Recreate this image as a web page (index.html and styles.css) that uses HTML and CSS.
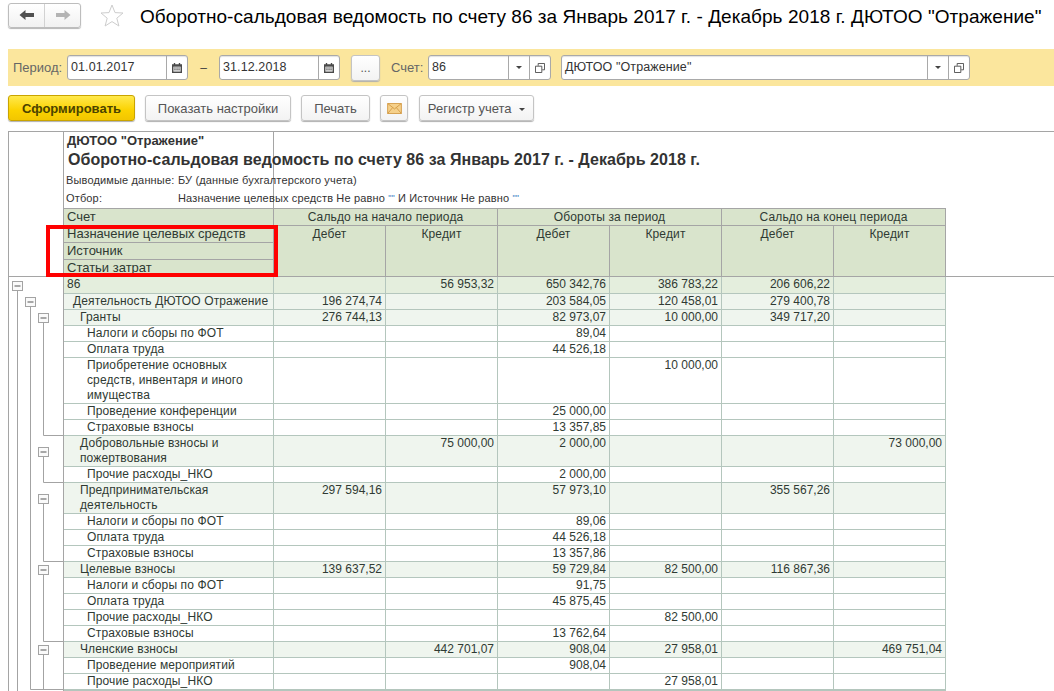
FILE: index.html
```html
<!DOCTYPE html>
<html lang="ru">
<head>
  <meta charset="UTF-8">
  <title>Оборотно-сальдовая ведомость</title>
  <link rel="stylesheet" href="styles.css">
</head>
<body>
  <header class="title-bar">
    <div class="nav">
      <button class="nav-btn">
        <svg width="16" height="12" viewBox="0 0 16 12"><path d="M0.5 6 L6.5 1 V4 H15 V8 H6.5 V11 Z" fill="#505050"/></svg>
      </button>
      <button class="nav-btn">
        <svg width="16" height="12" viewBox="0 0 16 12"><path d="M15.5 6 L9.5 1 V4 H1 V8 H9.5 V11 Z" fill="#b4b4b4"/></svg>
      </button>
    </div>
    <svg class="star" width="24" height="23" viewBox="0 0 24 23"><path d="M12 1 L15 8.6 L23 9 L16.8 14.2 L18.9 22 L12 17.6 L5.1 22 L7.2 14.2 L1 9 L9 8.6 Z" fill="#fff" stroke="#cdcdcd"/></svg>
    <h1 class="page-title">Оборотно-сальдовая ведомость по счету 86 за Январь 2017 г. - Декабрь 2018 г. ДЮТОО "Отражение"</h1>
  </header>

  <div class="filter-bar">
    <span class="label label-period">Период:</span>
    <div class="field field-date">
      <span class="field-text">01.01.2017</span>
      <span class="field-btn field-btn-cal">
        <svg width="10" height="10" viewBox="0 0 11 11"><path d="M0 1.5 H2 V0 H3.5 V1.5 H7.5 V0 H9 V1.5 H11 V11 H0 Z" fill="#4a4a4a"/><path d="M1.5 4 H9.5 V9.5 H1.5 Z" fill="#e8e8e8"/><path d="M2.5 5 H4 V6 H2.5 Z M4.8 5 H6.3 V6 H4.8 Z M7 5 H8.5 V6 H7 Z M2.5 7 H4 V8 H2.5 Z M4.8 7 H6.3 V8 H4.8 Z M7 7 H8.5 V8 H7 Z" fill="#4a4a4a"/></svg>
      </span>
    </div>
    <span class="dash">–</span>
    <div class="field field-date">
      <span class="field-text">31.12.2018</span>
      <span class="field-btn field-btn-cal">
        <svg width="10" height="10" viewBox="0 0 11 11"><path d="M0 1.5 H2 V0 H3.5 V1.5 H7.5 V0 H9 V1.5 H11 V11 H0 Z" fill="#4a4a4a"/><path d="M1.5 4 H9.5 V9.5 H1.5 Z" fill="#e8e8e8"/><path d="M2.5 5 H4 V6 H2.5 Z M4.8 5 H6.3 V6 H4.8 Z M7 5 H8.5 V6 H7 Z M2.5 7 H4 V8 H2.5 Z M4.8 7 H6.3 V8 H4.8 Z M7 7 H8.5 V8 H7 Z" fill="#4a4a4a"/></svg>
      </span>
    </div>
    <button class="btn btn-dots">...</button>
    <span class="label label-account">Счет:</span>
    <div class="field field-account">
      <span class="field-text">86</span>
      <span class="field-btn"><i class="caret"></i></span>
      <span class="field-btn">
        <svg width="10" height="10" viewBox="0 0 11 11"><path d="M3.5 3 V0.5 H10.5 V7.5 H8 M0.5 3.5 H7.5 V10.5 H0.5 Z" fill="none" stroke="#4a4a4a"/></svg>
      </span>
    </div>
    <div class="field field-org">
      <span class="field-text">ДЮТОО "Отражение"</span>
      <span class="field-btn"><i class="caret"></i></span>
      <span class="field-btn">
        <svg width="10" height="10" viewBox="0 0 11 11"><path d="M3.5 3 V0.5 H10.5 V7.5 H8 M0.5 3.5 H7.5 V10.5 H0.5 Z" fill="none" stroke="#4a4a4a"/></svg>
      </span>
    </div>
  </div>

  <div class="toolbar">
    <button class="btn btn-primary">Сформировать</button>
    <button class="btn btn-settings">Показать настройки</button>
    <button class="btn btn-print">Печать</button>
    <button class="btn btn-mail">
      <svg width="15" height="11" viewBox="0 0 16 12"><path d="M0.5 0.5 H15.5 V11.5 H0.5 Z" fill="#f5d08a" stroke="#d39a45"/><path d="M0.5 0.5 L8 6.5 L15.5 0.5 M0.5 11.5 L6 5 M15.5 11.5 L10 5" fill="none" stroke="#d39a45"/></svg>
    </button>
    <button class="btn btn-register">Регистр учета <i class="caret caret-btn"></i></button>
  </div>

  <div class="report">
    <table class="sheet">
      <colgroup>
        <col class="col-tree"><col class="col-name">
        <col class="col-num"><col class="col-num"><col class="col-num">
        <col class="col-num"><col class="col-num"><col class="col-num">
        <col class="col-rest">
      </colgroup>
      <tbody>
        <tr class="r-org">
          <td class="tree" rowspan="8"></td>
          <td class="top">ДЮТОО "Отражение"</td>
          <td class="blank-top" colspan="7"></td>
        </tr>
        <tr class="r-caption">
          <td class="top">Оборотно-сальдовая ведомость по счету 86 за Январь 2017 г. - Декабрь 2018 г.</td>
          <td class="blank" colspan="7"></td>
        </tr>
        <tr class="r-param">
          <td class="top"><span class="param-name">Выводимые данные:</span>БУ (данные бухгалтерского учета)</td>
          <td class="blank" colspan="7"></td>
        </tr>
        <tr class="r-param r-filter">
          <td class="top"><span class="param-name">Отбор:</span>Назначение целевых средств Не равно <span class="quotes">""</span> И Источник Не равно <span class="quotes">""</span></td>
          <td class="blank" colspan="7"></td>
        </tr>
        <tr class="r-head">
          <th class="h-name">Счет</th>
          <th colspan="2">Сальдо на начало периода</th>
          <th colspan="2">Обороты за период</th>
          <th colspan="2">Сальдо на конец периода</th>
          <td class="blank" rowspan="4"></td>
        </tr>
        <tr class="r-head">
          <th class="h-name">Назначение целевых средств</th>
          <th rowspan="3">Дебет</th><th rowspan="3">Кредит</th>
          <th rowspan="3">Дебет</th><th rowspan="3">Кредит</th>
          <th rowspan="3">Дебет</th><th rowspan="3">Кредит</th>
        </tr>
        <tr class="r-head"><th class="h-name">Источник</th></tr>
        <tr class="r-head"><th class="h-name">Статьи затрат</th></tr>

        <tr class="lvl0">
          <td class="tree tree-first"></td><td class="name">86</td>
          <td></td><td>56 953,32</td><td>650 342,76</td><td>386 783,22</td><td>206 606,22</td><td></td><td class="rest rest-first"></td>
        </tr>
        <tr class="lvl1">
          <td class="tree"></td><td class="name">Деятельность ДЮТОО Отражение</td>
          <td>196 274,74</td><td></td><td>203 584,05</td><td>120 458,01</td><td>279 400,78</td><td></td><td class="rest"></td>
        </tr>
        <tr class="lvl2">
          <td class="tree"></td><td class="name">Гранты</td>
          <td>276 744,13</td><td></td><td>82 973,07</td><td>10 000,00</td><td>349 717,20</td><td></td><td class="rest"></td>
        </tr>
        <tr class="lvl3">
          <td class="tree"></td><td class="name">Налоги и сборы по ФОТ</td>
          <td></td><td></td><td>89,04</td><td></td><td></td><td></td><td class="rest"></td>
        </tr>
        <tr class="lvl3">
          <td class="tree"></td><td class="name">Оплата труда</td>
          <td></td><td></td><td>44 526,18</td><td></td><td></td><td></td><td class="rest"></td>
        </tr>
        <tr class="lvl3">
          <td class="tree"></td><td class="name">Приобретение основных средств, инвентаря и иного имущества</td>
          <td></td><td></td><td></td><td>10 000,00</td><td></td><td></td><td class="rest"></td>
        </tr>
        <tr class="lvl3">
          <td class="tree"></td><td class="name">Проведение конференции</td>
          <td></td><td></td><td>25 000,00</td><td></td><td></td><td></td><td class="rest"></td>
        </tr>
        <tr class="lvl3">
          <td class="tree"></td><td class="name">Страховые взносы</td>
          <td></td><td></td><td>13 357,85</td><td></td><td></td><td></td><td class="rest"></td>
        </tr>
        <tr class="lvl2">
          <td class="tree"></td><td class="name">Добровольные взносы и пожертвования</td>
          <td></td><td>75 000,00</td><td>2 000,00</td><td></td><td></td><td>73 000,00</td><td class="rest"></td>
        </tr>
        <tr class="lvl3">
          <td class="tree"></td><td class="name">Прочие расходы_НКО</td>
          <td></td><td></td><td>2 000,00</td><td></td><td></td><td></td><td class="rest"></td>
        </tr>
        <tr class="lvl2">
          <td class="tree"></td><td class="name">Предпринимательская деятельность</td>
          <td>297 594,16</td><td></td><td>57 973,10</td><td></td><td>355 567,26</td><td></td><td class="rest"></td>
        </tr>
        <tr class="lvl3">
          <td class="tree"></td><td class="name">Налоги и сборы по ФОТ</td>
          <td></td><td></td><td>89,06</td><td></td><td></td><td></td><td class="rest"></td>
        </tr>
        <tr class="lvl3">
          <td class="tree"></td><td class="name">Оплата труда</td>
          <td></td><td></td><td>44 526,18</td><td></td><td></td><td></td><td class="rest"></td>
        </tr>
        <tr class="lvl3">
          <td class="tree"></td><td class="name">Страховые взносы</td>
          <td></td><td></td><td>13 357,86</td><td></td><td></td><td></td><td class="rest"></td>
        </tr>
        <tr class="lvl2">
          <td class="tree"></td><td class="name">Целевые взносы</td>
          <td>139 637,52</td><td></td><td>59 729,84</td><td>82 500,00</td><td>116 867,36</td><td></td><td class="rest"></td>
        </tr>
        <tr class="lvl3">
          <td class="tree"></td><td class="name">Налоги и сборы по ФОТ</td>
          <td></td><td></td><td>91,75</td><td></td><td></td><td></td><td class="rest"></td>
        </tr>
        <tr class="lvl3">
          <td class="tree"></td><td class="name">Оплата труда</td>
          <td></td><td></td><td>45 875,45</td><td></td><td></td><td></td><td class="rest"></td>
        </tr>
        <tr class="lvl3">
          <td class="tree"></td><td class="name">Прочие расходы_НКО</td>
          <td></td><td></td><td></td><td>82 500,00</td><td></td><td></td><td class="rest"></td>
        </tr>
        <tr class="lvl3">
          <td class="tree"></td><td class="name">Страховые взносы</td>
          <td></td><td></td><td>13 762,64</td><td></td><td></td><td></td><td class="rest"></td>
        </tr>
        <tr class="lvl2">
          <td class="tree"></td><td class="name">Членские взносы</td>
          <td></td><td>442 701,07</td><td>908,04</td><td>27 958,01</td><td></td><td>469 751,04</td><td class="rest"></td>
        </tr>
        <tr class="lvl3">
          <td class="tree"></td><td class="name">Проведение мероприятий</td>
          <td></td><td></td><td>908,04</td><td></td><td></td><td></td><td class="rest"></td>
        </tr>
        <tr class="lvl3">
          <td class="tree"></td><td class="name">Прочие расходы_НКО</td>
          <td></td><td></td><td></td><td>27 958,01</td><td></td><td></td><td class="rest"></td>
        </tr>
        <tr class="lvl1">
          <td class="tree"></td><td class="name"></td>
          <td></td><td></td><td></td><td></td><td></td><td></td><td class="rest"></td>
        </tr>
      </tbody>
    </table>

    <!-- outline tree, coordinates are page pixels -->
    <svg class="outline" width="55" height="415" viewBox="8 276 55 415">
      <g fill="none" stroke="#a3a3a3">
        <path d="M17.5 290 V691"/>
        <path d="M30.5 307 V689.5 H63"/>
        <path d="M43.5 323 V435.5 H63"/>
        <path d="M43.5 457 V482.5 H63"/>
        <path d="M43.5 503 V561.5 H63"/>
        <path d="M43.5 574 V641.5 H63"/>
        <path d="M43.5 654 V689"/>
      </g>
      <g class="node"><rect x="12.5" y="281.5" width="10" height="9"/><path d="M14.5 286 H20.5"/></g>
      <g class="node"><rect x="25.5" y="297.5" width="10" height="9"/><path d="M27.5 302 H33.5"/></g>
      <g class="node"><rect x="38.5" y="313.5" width="10" height="9"/><path d="M40.5 318 H46.5"/></g>
      <g class="node"><rect x="38.5" y="447.5" width="10" height="9"/><path d="M40.5 452 H46.5"/></g>
      <g class="node"><rect x="38.5" y="494.5" width="10" height="9"/><path d="M40.5 499 H46.5"/></g>
      <g class="node"><rect x="38.5" y="565.5" width="10" height="9"/><path d="M40.5 570 H46.5"/></g>
      <g class="node"><rect x="38.5" y="645.5" width="10" height="9"/><path d="M40.5 650 H46.5"/></g>
    </svg>

    <div class="red-box"></div>
  </div>
</body>
</html>
```

FILE: styles.css
```css
* {
  box-sizing: border-box;
}

html, body {
  margin: 0;
  padding: 0;
  height: 691px;
  overflow: hidden;
  background: #fff;
}

body {
  font-family: "Liberation Sans", Arial, sans-serif;
  font-size: 12px;
  color: #333;
}

/* title */
.title-bar {
  display: flex;
  align-items: center;
  height: 49px;
  padding: 0 0 19px 8px;
}

.nav {
  display: flex;
  width: 73px;
  height: 25px;
  border: 1px solid #bdbdbd;
  border-radius: 3px;
  background: linear-gradient(#fff, #f1f1f1);
  box-shadow: 0 1px 1px #b5b5b5;
}

.nav-btn {
  flex: 1;
  padding: 0;
  border: none;
  background: none;
  display: flex;
  align-items: center;
  justify-content: center;
}

.nav-btn + .nav-btn {
  border-left: 1px solid #d2d2d2;
}

.star {
  margin-left: 19px;
}

.page-title {
  margin: 3px 0 0 16px;
  font-size: 19px;
  letter-spacing: 0.05px;
  font-weight: normal;
  color: #000;
  white-space: nowrap;
}

/* filter bar */
.filter-bar {
  display: flex;
  align-items: center;
  height: 37px;
  margin-left: 8px;
  padding-left: 5px;
  background: #fbe69d;
}

.label {
  font-size: 13px;
  color: #666;
}

.label-period {
  width: 54px;
}

.label-account {
  width: 37px;
  margin-left: 11px;
}

.field {
  display: flex;
  height: 25px;
  border: 1px solid #a9a9a9;
  border-radius: 3px;
  background: #fff;
  box-shadow: inset 0 1px 1px #e2e2e2;
}

.field-date {
  width: 121px;
}

.field-account {
  width: 123px;
}

.field-org {
  width: 409px;
  margin-left: 10px;
}

.field-text {
  flex: 1;
  padding-left: 3px;
  font-size: 12.5px;
  letter-spacing: 0.1px;
  line-height: 23px;
  color: #333;
}

.field-btn {
  width: 21px;
  border-left: 1px solid #a9a9a9;
  display: flex;
  align-items: center;
  justify-content: center;
}

.caret {
  display: inline-block;
  width: 0;
  height: 0;
  border-left: 3px solid transparent;
  border-right: 3px solid transparent;
  border-top: 3px solid #444;
}

.dash {
  width: 31px;
  text-align: center;
  color: #444;
}

/* buttons */
.btn {
  height: 26px;
  padding: 0;
  border: 1px solid #c4c4c4;
  border-radius: 3px;
  background: linear-gradient(#fff, #f3f3f3);
  box-shadow: 0 1px 1px #b0b0b0;
  font-family: inherit;
  font-size: 13px;
  color: #555;
}

.btn-dots {
  width: 29px;
  margin-left: 11px;
  font-size: 12px;
}

.toolbar {
  display: flex;
  gap: 10px;
  margin: 9px 0 10px 8px;
  height: 26px;
}

.btn-primary {
  width: 127px;
  border-color: #c9a400;
  background: linear-gradient(#ffe94d, #fbd200 60%, #f2c600);
  font-weight: bold;
  color: #4a4300;
}

.btn-settings {
  width: 146px;
}

.btn-print {
  width: 69px;
}

.btn-mail {
  width: 28px;
  display: flex;
  align-items: center;
  justify-content: center;
}

.btn-register {
  width: 115px;
  margin-left: 1px;
}

.caret-btn {
  margin-left: 4px;
  vertical-align: 2px;
}

/* report */
.report {
  position: relative;
  margin-left: 8px;
}

.sheet {
  table-layout: fixed;
  border-collapse: collapse;
  width: 1046px;
  font-size: 12px;
  line-height: 15px;
}

.col-tree { width: 55px; }
.col-name { width: 210px; }
.col-num { width: 112px; }
.col-rest { width: 109px; }

.sheet td,
.sheet th {
  padding: 0 3px 0 3px;
  vertical-align: top;
  border: 1px solid #b4c6bd;
  color: #2f3a33;
}

.sheet tbody tr > td {
  text-align: right;
}

.sheet td.tree {
  border: none;
  border-left: 1px solid #a5a5a5;
  border-right: 1px solid #a5a5a5;
  padding: 0;
}

.sheet td.rest,
.sheet td.blank {
  border: none;
}

.sheet td.blank-top {
  border: none;
  border-top: 1px solid #a5a5a5;
}

.sheet td.tree-first,
.sheet td.rest-first {
  border-top: 1px solid #a5a5a5;
}

.sheet td.top {
  text-align: left;
  white-space: nowrap;
  border: none;
  border-right: 1px solid #a5a5a5;
  color: #333;
}

tr.r-org { height: 17px; }
tr.r-caption { height: 23px; }
tr.r-param { height: 18px; }
tr.r-filter { height: 19px; }
tr.r-head { height: 17px; }

.sheet tr.r-org td.top {
  border-top: 1px solid #a5a5a5;
  padding-top: 1px;
  font-size: 13px;
  font-weight: bold;
}

.sheet tr.r-org td.tree {
  border-top: 1px solid #a5a5a5;
}

.sheet tr.r-caption td.top {
  padding-left: 4px;
  font-size: 16px;
  font-weight: bold;
  letter-spacing: 0.05px;
  line-height: 22px;
}

.sheet tr.r-param td.top {
  padding-left: 2px;
  font-size: 11px;
  letter-spacing: 0.15px;
  line-height: 17px;
}

.param-name {
  display: inline-block;
  width: 112px;
}

.quotes {
  color: #3d7fc4;
  font-size: 9px;
  vertical-align: 1px;
}

.sheet th {
  font-weight: normal;
  background: #d9e4cc;
  border-color: #a5a5a5;
  text-align: center;
  letter-spacing: 0.15px;
  line-height: 16px;
}

.sheet th.h-name {
  font-size: 13px;
  letter-spacing: 0;
  text-align: left;
}

.sheet .name {
  text-align: left;
  letter-spacing: 0.12px;
}

tr.lvl0 { height: 17px; background: #e4eedd; }
tr.lvl1,
tr.lvl2 { background: #eff5ee; }
tr.lvl3 { background: #fff; }

tr.lvl0 td.tree,
tr.lvl1 td.tree,
tr.lvl2 td.tree,
tr.lvl3 td.tree,
tr td.rest {
  background: #fff;
}

tr.lvl0 .name { padding-left: 3px; }
tr.lvl1 .name { padding-left: 9px; }
tr.lvl2 .name { padding-left: 16px; }
tr.lvl3 .name { padding-left: 23px; }

/* overlays */
.outline {
  position: absolute;
  left: 0;
  top: 145px;
}

.node rect {
  fill: #fafafa;
  stroke: #a3a3a3;
}

.node path {
  fill: none;
  stroke: #555;
}

.red-box {
  position: absolute;
  left: 38px;
  top: 94px;
  width: 232px;
  height: 52px;
  border: 4px solid #f00;
}
```
